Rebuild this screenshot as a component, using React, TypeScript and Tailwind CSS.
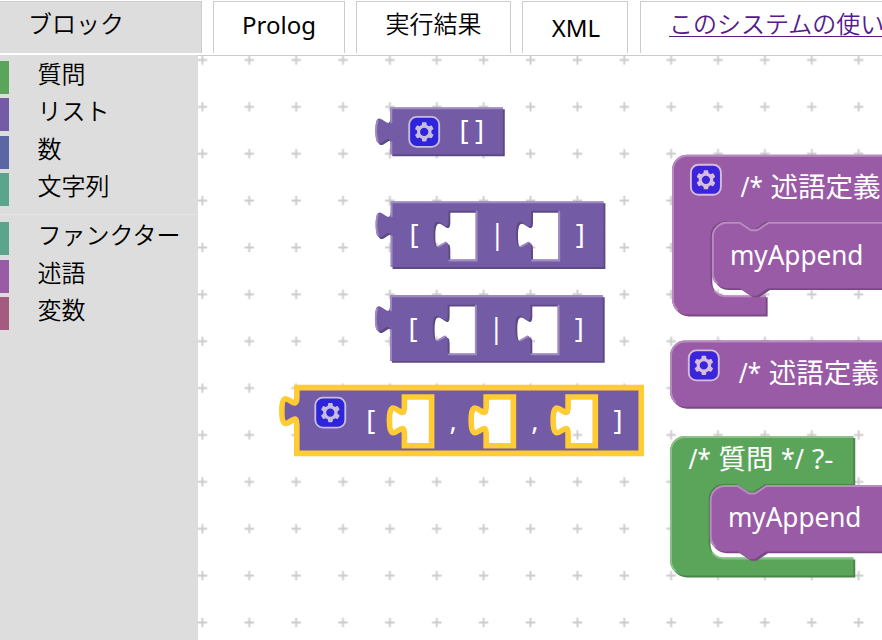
import React from "react";

const UNIT = 1.875;

const LIST = { fill: "#745ba5", dark: "#5d4984", light: "#9e8cc0" };
const PREDICATE = { fill: "#995ba5", dark: "#7a4984", light: "#b88cc0" };
const QUERY = { fill: "#5ba55b", dark: "#498449", light: "#8cc08c" };

type Palette = typeof LIST;

const GEAR =
  "m4.203,7.296 0,1.368 -0.92,0.677 -0.11,0.41 0.9,1.559 0.41,0.11 1.043,-0.457 1.187,0.683 0.127,1.134 0.3,0.3 1.8,0 0.3,-0.299 0.127,-1.138 1.185,-0.682 1.046,0.458 0.409,-0.11 0.9,-1.559 -0.11,-0.41 -0.92,-0.677 0,-1.366 0.92,-0.677 0.11,-0.41 -0.9,-1.559 -0.409,-0.109 -1.046,0.458 -1.185,-0.682 -0.127,-1.138 -0.3,-0.299 -1.8,0 -0.3,0.3 -0.126,1.135 -1.187,0.682 -1.043,-0.457 -0.41,0.11 -0.899,1.559 0.108,0.409z";

const TAB_UP = "c 0,-10 -8,8 -8,-7.5 s 8,2.5 8,-7.5";
const TAB_DOWN = "c 0,10 -8,-8 -8,7.5 s 8,-2.5 8,7.5";

function Shape({
  x,
  y,
  palette,
  path,
  light,
  selected = false,
}: {
  x: number;
  y: number;
  palette: Palette;
  path: string;
  light: string;
  selected?: boolean;
}) {
  return (
    <g transform={`translate(${x},${y}) scale(${UNIT})`} fillRule="evenodd">
      <path d={path} transform="translate(1,1)" fill={palette.dark} />
      <path
        d={path}
        fill={palette.fill}
        stroke={selected ? "#ffcc33" : "none"}
        strokeWidth={3}
      />
      {!selected && (
        <path d={light} fill="none" stroke={palette.light} strokeWidth={1} strokeLinecap="round" />
      )}
    </g>
  );
}

/* A value block: puzzle tab on the left, optional inline sockets. */
function ValueBlock({
  x,
  y,
  w,
  h,
  sockets = [],
  selected,
}: {
  x: number;
  y: number;
  w: number;
  h: number;
  sockets?: number[];
  selected?: boolean;
}) {
  const holes = sockets
    .map((s) => `M ${s},5 v 5 ${TAB_DOWN} v 6 h 14.5 v -26 z`)
    .join(" ");
  const holeLights = sockets
    .map((s) => `M ${s + 15},5.5 v 26 h -14.5 M ${s - 5.2},24 l 3.7,-2.1`)
    .join(" ");
  return (
    <Shape
      x={x}
      y={y}
      palette={LIST}
      selected={selected}
      path={`M 0,0 H ${w} V ${h} H 0 V 20 ${TAB_UP} z ${holes}`}
      light={`M 0.5,${h - 0.5} V 18.5 m -7.36,-0.5 q -1.52,-5.5 0,-11 m 7.36,1 V 0.5 H ${w - 0.5} ${holeLights}`}
    />
  );
}

/* A block that wraps a stack of statements. */
function ContainerBlock({
  x,
  y,
  w,
  top,
  foot,
  h,
  footW,
  inset,
  palette,
}: {
  x: number;
  y: number;
  w: number;
  top: number;
  foot: number;
  h: number;
  footW: number;
  inset: number;
  palette: Palette;
}) {
  return (
    <Shape
      x={x}
      y={y}
      palette={palette}
      path={`M 0,8 A 8,8 0 0 1 8,0 H ${w} V ${top} H ${inset + 30} l -6,4 -3,0 -6,-4 h -7 a 8,8 0 0 0 -8,8 V ${foot - 8} a 8,8 0 0 0 8,8 H ${footW} V ${h} H 8 a 8,8 0 0 1 -8,-8 z`}
      light={`M 2.7,${h - 2.7} A 7.5,7.5 0 0 1 0.5,${h - 8} V 8 A 7.5,7.5 0 0 1 8,0.5 H ${w - 0.5} M ${inset + 2.3},${foot - 2.3} a 8.5,8.5 0 0 0 5.7,2.8 H ${footW - 0.5}`}
    />
  );
}

function StatementBlock({
  x,
  y,
  h,
  notch = true,
}: {
  x: number;
  y: number;
  h: number;
  notch?: boolean;
}) {
  const upper = notch ? "H 15 l 6,4 3,0 6,-4" : "";
  const lower = notch ? "H 30 l -6,4 -3,0 -6,-4" : "";
  return (
    <Shape
      x={x}
      y={y}
      palette={PREDICATE}
      path={`M 0,8 A 8,8 0 0 1 8,0 ${upper} H 140 V ${h} ${lower} H 8 a 8,8 0 0 1 -8,-8 z`}
      light={`M 2.7,${h - 2.7} A 7.5,7.5 0 0 1 0.5,${h - 8} V 8 A 7.5,7.5 0 0 1 8,0.5 ${notch ? "H 14.8 l 6,4 3.4,0 6,-4" : ""} H 140`}
    />
  );
}

function Mutator({ x, y }: { x: number; y: number }) {
  return (
    <g transform={`translate(${x},${y}) scale(${UNIT})`} opacity={0.6}>
      <rect width="16" height="16" rx="4" ry="4" fill="#00f" stroke="#fff" strokeWidth="1" />
      <path d={GEAR} fill="#fff" />
      <circle cx="8" cy="8" r="2.7" fill="#00f" stroke="#fff" strokeWidth="1" />
    </g>
  );
}

function Label({ x, y, w, children }: { x: number; y: number; w?: number; children: string }) {
  return (
    <text
      x={x}
      y={y}
      textLength={w}
      lengthAdjust="spacingAndGlyphs"
      fill="#fff"
      className="font-['Noto_Sans','Noto_Sans_CJK_JP',sans-serif] text-[27.5px] font-normal"
    >
      {children}
    </text>
  );
}

function Workspace() {
  return (
    <svg className="block h-full w-full" viewBox="198 56 684 584">
      <defs>
        <pattern id="grid" patternUnits="userSpaceOnUse" x="178.95" y="36.55" width="46.875" height="46.875">
          <path d="M18.7 23.45 h9.5 M23.45 18.7 v9.5" stroke="#ccc" strokeWidth="1.875" />
        </pattern>
      </defs>
      <rect x="198" y="56" width="684" height="584" fill="url(#grid)" />

      <ValueBlock x={390.4} y={107.4} w={60} h={25} />
      <Mutator x={409.2} y={116.9} />
      <Label x={459.6} y={139.5}>[</Label>
      <Label x={475} y={139.5}>]</Label>

      <ValueBlock x={390.7} y={201.4} w={113.5} h={35} sockets={[30.8, 74.9]} />
      <Label x={409.6} y={243.7}>[</Label>
      <Label x={489.8} y={243.7}>|</Label>
      <Label x={575.8} y={243.7}>]</Label>

      <ValueBlock x={390} y={295.3} w={113.5} h={35} sockets={[30.8, 74.9]} />
      <Label x={408.6} y={337.6}>[</Label>
      <Label x={488.8} y={337.6}>|</Label>
      <Label x={574.8} y={337.6}>]</Label>

      <ValueBlock x={296.8} y={387.6} w={183.7} h={35.1} sockets={[57.4, 101, 144.7]} selected />
      <Mutator x={315.3} y={397.6} />
      <Label x={366.2} y={429.8}>[</Label>
      <Label x={449.6} y={429.8}>,</Label>
      <Label x={531.2} y={429.8}>,</Label>
      <Label x={613.6} y={429.8}>]</Label>

      <ContainerBlock x={672} y={154.8} w={140} top={35.4} foot={75} h={85.2} footW={50} inset={20.5} palette={PREDICATE} />
      <Mutator x={690.9} y={164.8} />
      <Label x={740.6} y={197} w={22.4}>/*</Label>
      <Label x={770.6} y={197}>述語定義</Label>
      <StatementBlock x={711.9} y={221.8} h={35.4} />
      <Label x={729.9} y={265} w={133.5}>myAppend</Label>

      <StatementBlock x={670.1} y={340.6} h={35.3} notch={false} />
      <Mutator x={688.8} y={350.4} />
      <Label x={738.8} y={383} w={22.4}>/*</Label>
      <Label x={768.8} y={383}>述語定義</Label>

      <ContainerBlock x={670} y={436.1} w={97.8} top={25.6} foot={64.8} h={74.4} footW={97.8} inset={20.6} palette={QUERY} />
      <Label x={688.6} y={469} w={22.4}>/*</Label>
      <Label x={718.6} y={469}>質問</Label>
      <Label x={781} y={469} w={23}>*/</Label>
      <Label x={812} y={469} w={21.5}>?-</Label>
      <StatementBlock x={709.8} y={485} h={35.4} />
      <Label x={727.9} y={527} w={133.5}>myAppend</Label>
    </svg>
  );
}

function Category({ color, children }: { color: string; children: string }) {
  return (
    <div className="mb-[4.5px] flex h-[33px] items-center">
      <div className={`h-full w-[9px] shrink-0 ${color}`} />
      <span className="ml-[28.5px] -mt-[7px] whitespace-nowrap text-2xl leading-none">{children}</span>
    </div>
  );
}

export default function App() {
  return (
    <div className="flex h-[640px] w-[882px] flex-col overflow-hidden bg-white font-['Noto_Sans','Noto_Sans_CJK_JP',sans-serif] text-2xl font-[350] text-black">
      <header className="flex h-[55px] shrink-0 pt-px leading-none">
        <div className="h-[52px] w-[202px] shrink-0 border-t border-r border-[#ccc] bg-[#ddd] pt-[10px] pl-7">ブロック</div>
        <div className="ml-[11px] h-[52px] w-[132px] shrink-0 border border-b-0 border-[#ccc] pt-[11px] text-center font-normal">Prolog</div>
        <div className="ml-[11px] h-[52px] w-[155px] shrink-0 border border-b-0 border-[#ccc] pt-[10px] text-center">実行結果</div>
        <div className="ml-[11px] h-[52px] w-[106px] shrink-0 border border-b-0 border-[#ccc] pt-[14px] pl-0.5 text-center font-normal">XML</div>
        <div className="ml-3 h-[52px] w-[280px] shrink-0 border border-b-0 border-[#ccc] pt-[10px] pl-7 whitespace-nowrap">
          <a className="text-[#551a8b] underline decoration-1 underline-offset-[3px]">このシステムの使い方</a>
        </div>
      </header>
      <main className="flex min-h-0 flex-1">
        <nav className="w-[198px] shrink-0 bg-[#ddd] pt-[5.9px]">
          <Category color="bg-[#5ba55b]">質問</Category>
          <Category color="bg-[#745ba5]">リスト</Category>
          <Category color="bg-[#5b67a5]">数</Category>
          <Category color="bg-[#5ba58c]">文字列</Category>
          <div className="mt-[7.5px] mb-[7.5px] h-px bg-[#e5e5e5]" />
          <Category color="bg-[#5ba58c]">ファンクター</Category>
          <Category color="bg-[#995ba5]">述語</Category>
          <Category color="bg-[#a55b80]">変数</Category>
        </nav>
        <section className="min-w-0 flex-1 border-t border-[#ccc]">
          <Workspace />
        </section>
      </main>
    </div>
  );
}
